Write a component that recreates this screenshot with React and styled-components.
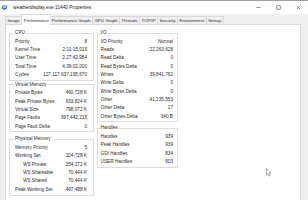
import styled, { createGlobalStyle } from "styled-components";

const GlobalStyle = createGlobalStyle`
    html, body {
        margin: 0;
        padding: 0;
        background: #f0f0f0;
    }
    body {
        font-family: "Liberation Sans", Arial, sans-serif;
        color: #2a2a2a;
    }
`

const Window = styled.div`
    position: relative;
    width: 308px;
    height: 200px;
    overflow: hidden;
    box-sizing: border-box;
    border-top: 1px solid #a0a0a0;
    background: #f0f0f0;
    display: flex;
    flex-direction: column;
`

const TitleBar = styled.div`
    flex: 0 0 13px;
    display: flex;
    align-items: center;
    background: #fff;
    padding-left: 2px;
`

const Title = styled.span`
    flex: 1;
    margin-left: 6px;
    font-size: 4.8px;
    line-height: 6px;
    color: #1a1a1a;
`

const Control = styled.div`
    width: 20px;
    height: 13px;
    display: flex;
    align-items: center;
    justify-content: center;
`

const TabRow = styled.div`
    flex: 0 0 10px;
    display: flex;
    align-items: flex-end;
    padding-left: 5px;
    position: relative;
    z-index: 1;
    margin-bottom: -1px;
`

const Tab = styled.div`
    box-sizing: border-box;
    height: ${p => (p.$active ? "11px" : "9px")};
    padding: 0 1.5px;
    margin: ${p => (p.$active ? "0 -1px" : "0")};
    display: flex;
    align-items: center;
    font-size: 4.4px;
    white-space: nowrap;
    background: ${p => (p.$active ? "#fff" : "#f0f0f0")};
    border: 1px solid #d9d9d9;
    border-bottom: ${p => (p.$active ? "none" : "1px solid #d9d9d9")};
    border-left: ${p => (p.$first || p.$active ? "1px solid #d9d9d9" : "none")};
`

const Panel = styled.div`
    flex: 1;
    margin: 0 7px 0 5px;
    background: #fff;
    border: 1px solid #d9d9d9;
    border-bottom: none;
    padding: 5px 0 0 3px;
    display: grid;
    grid-template-columns: 85px 81px;
    column-gap: 3px;
    align-content: start;
`

const Column = styled.div`
    display: flex;
    flex-direction: column;
`

const Group = styled.fieldset`
    margin: ${p => p.$top || 0}px 0 0;
    min-width: 0;
    border: 1px solid #dcdcdc;
    padding: 1px ${p => p.$right || 6}px 1px ${p => p.$left || 5}px;
`

const Legend = styled.legend`
    padding: 0 1px;
    margin-left: -1px;
    font-size: 4.7px;
    line-height: 6px;
`

const Row = styled.div`
    height: 8.35px;
    display: flex;
    align-items: center;
    justify-content: space-between;
    font-size: 4.7px;
    white-space: nowrap;
    padding-left: ${p => (p.$indent ? 8 : 0)}px;
`

const Cursor = styled.svg`
    position: absolute;
    left: 266px;
    top: 167px;
`

const tabs = [
    "Image", "Performance", "Performance Graph", "GPU Graph", "Threads",
    "TCP/IP", "Security", "Environment", "Strings",
]

const cpu = [
    ["Priority", "8"],
    ["Kernel Time", "2:11:15.015"],
    ["User Time", "2:27:42.984"],
    ["Total Time", "4:39:02.000"],
    ["Cycles", "127,117,637,195,670"],
]

const virtualMemory = [
    ["Private Bytes", "460,728 K"],
    ["Peak Private Bytes", "633,824 K"],
    ["Virtual Size", "798,072 K"],
    ["Page Faults", "997,442,215"],
    ["Page Fault Delta", "0"],
]

const physicalMemory = [
    ["Memory Priority", "5"],
    ["Working Set", "324,728 K"],
    ["WS Private", "254,272 K", true],
    ["WS Shareable", "70,444 K", true],
    ["WS Shared", "70,444 K", true],
    ["Peak Working Set", "497,488 K"],
]

const io = [
    ["I/O Priority", "Normal"],
    ["Reads", "22,263,628"],
    ["Read Delta", "0"],
    ["Read Bytes Delta", "0"],
    ["Writes", "39,841,762"],
    ["Write Delta", "0"],
    ["Write Bytes Delta", "0"],
    ["Other", "41,235,553"],
    ["Other Delta", "17"],
    ["Other Bytes Delta", "340 B"],
]

const handles = [
    ["Handles", "939"],
    ["Peak Handles", "939"],
    ["GDI Handles", "834"],
    ["USER Handles", "603"],
]

const Rows = ({ items }) =>
    items.map(([label, value, indent]) => (
        <Row key={label} $indent={indent}>
            <span>{label}</span>
            <span>{value}</span>
        </Row>
    ))

const App = () => {
    return (
        <>
            <GlobalStyle />
            <Window>
                <TitleBar>
                    <svg width="5" height="5" viewBox="0 0 5 5">
                        <rect x="0" y="0.5" width="5" height="3.5" fill="#3a78c8" />
                        <rect x="0.8" y="1.2" width="3.4" height="2" fill="#9fd0f5" />
                        <rect x="1.5" y="4" width="2" height="1" fill="#666" />
                    </svg>
                    <Title>weatherdisplay.exe:11440 Properties</Title>
                    <Control>
                        <svg width="5" height="5" viewBox="0 0 5 5">
                            <line x1="0.5" y1="2.5" x2="4.5" y2="2.5" stroke="#444" strokeWidth="0.6" />
                        </svg>
                    </Control>
                    <Control>
                        <svg width="5" height="5" viewBox="0 0 5 5">
                            <rect x="0.8" y="0.8" width="3.4" height="3.4" fill="none" stroke="#444" strokeWidth="0.6" />
                        </svg>
                    </Control>
                    <Control>
                        <svg width="5" height="5" viewBox="0 0 5 5">
                            <path d="M0.8 0.8 L4.2 4.2 M4.2 0.8 L0.8 4.2" stroke="#444" strokeWidth="0.6" />
                        </svg>
                    </Control>
                </TitleBar>
                <TabRow>
                    {tabs.map((t, i) => (
                        <Tab key={t} $first={i === 0} $active={t === "Performance"}>{t}</Tab>
                    ))}
                </TabRow>
                <Panel>
                    <Column>
                        <Group>
                            <Legend>CPU</Legend>
                            <Rows items={cpu} />
                        </Group>
                        <Group $top={1}>
                            <Legend>Virtual Memory</Legend>
                            <Rows items={virtualMemory} />
                        </Group>
                        <Group $top={4}>
                            <Legend>Physical Memory</Legend>
                            <Rows items={physicalMemory} />
                        </Group>
                    </Column>
                    <Column>
                        <Group $left={2.5} $right={4}>
                            <Legend>I/O</Legend>
                            <Rows items={io} />
                        </Group>
                        <Group $top={3} $left={2.5} $right={4}>
                            <Legend>Handles</Legend>
                            <Rows items={handles} />
                        </Group>
                    </Column>
                </Panel>
                <Cursor width="6" height="9" viewBox="0 0 6 9">
                    <path d="M0.5 0.5 L0.5 7 L2 5.6 L3.2 8.2 L4 7.8 L2.9 5.3 L4.8 5.3 Z" fill="#fff" stroke="#777" strokeWidth="0.6" />
                </Cursor>
            </Window>
        </>
    )
}

export default App
